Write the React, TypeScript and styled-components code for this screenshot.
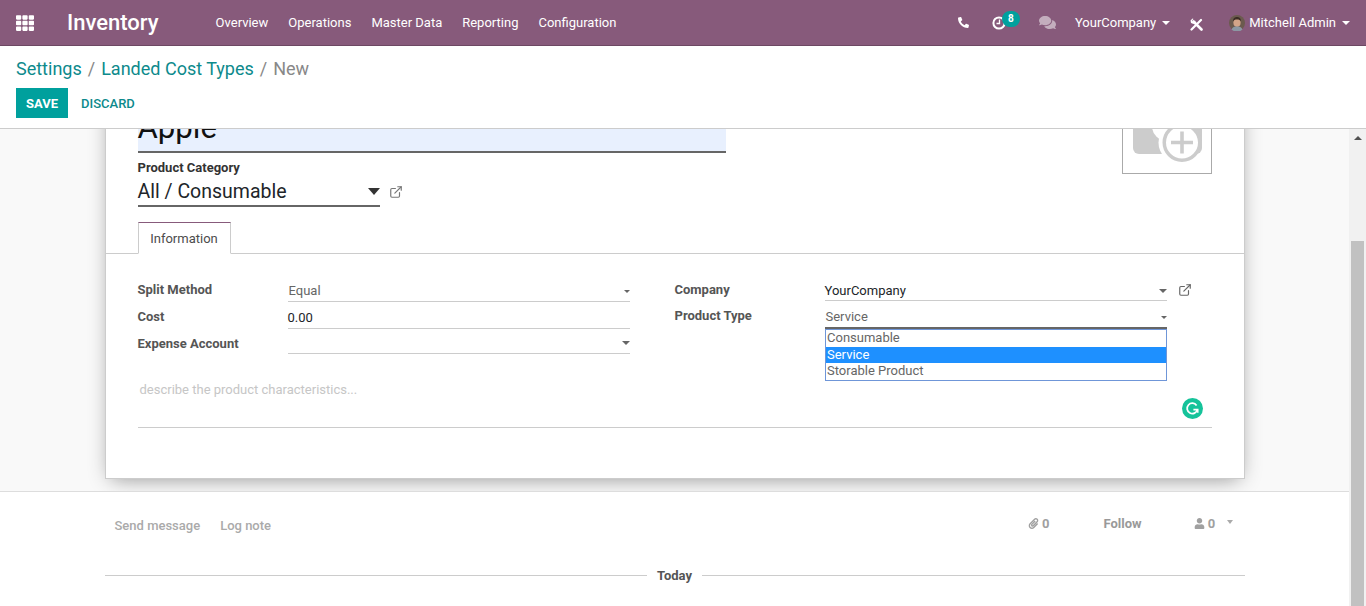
import styled, { createGlobalStyle } from "styled-components";
import { FaTh, FaPhone, FaComments, FaPaperclip, FaUser } from "react-icons/fa";
import { FiExternalLink } from "react-icons/fi";

const GlobalStyle = createGlobalStyle`
  html, body {
    margin: 0;
    height: 100%;
    overflow: hidden;
    background: #fff;
    font-family: Roboto, "Noto Sans", sans-serif;
    font-size: 13px;
    color: #4c4c4c;
  }
`;

const Page = styled.div`
  display: flex;
  flex-direction: column;
  height: 606px;
`;

const NavBar = styled.header`
  display: flex;
  align-items: center;
  flex: none;
  height: 45px;
  background: #875a7b;
  border-bottom: 1px solid #6d4863;
  color: #fff;
`;

const AppsButton = styled.span`
  display: flex;
  margin-left: 16px;
  font-size: 18px;
`;

const Brand = styled.span`
  margin-left: 33px;
  margin-right: 57px;
  font-size: 22px;
  font-weight: 500;
`;

const NavLink = styled.span`
  margin-right: 20px;
  font-size: 13px;
  color: #fff;
`;

const NavRight = styled.div`
  display: flex;
  align-items: center;
  margin-left: auto;
  padding-right: 16px;
`;

const NavIcon = styled.span<{ $gap: number; $muted?: boolean; $size?: number; $drop?: number }>`
  position: relative;
  display: flex;
  align-items: center;
  margin-left: ${({ $gap }) => $gap}px;
  margin-top: ${({ $drop }) => $drop ?? 0}px;
  font-size: ${({ $size }) => $size ?? 13}px;
  color: ${({ $muted }) => ($muted ? "rgba(255,255,255,0.5)" : "#fff")};
`;

const Badge = styled.span`
  position: absolute;
  left: 10px;
  top: -5px;
  width: 18px;
  height: 16px;
  border-radius: 9px;
  background: #00a09d;
  color: #fff;
  font-size: 10px;
  font-weight: 700;
  line-height: 16px;
  text-align: center;
`;

const NavText = styled.span<{ $gap: number }>`
  margin-left: ${({ $gap }) => $gap}px;
  color: #fff;
`;

const Caret = styled.span<{ $w: number; $color?: string; $gap?: number }>`
  flex: none;
  width: 0;
  height: 0;
  margin-left: ${({ $gap }) => $gap ?? 0}px;
  border-left: ${({ $w }) => $w / 2}px solid transparent;
  border-right: ${({ $w }) => $w / 2}px solid transparent;
  border-top: ${({ $w }) => Math.round($w * 0.5)}px solid ${({ $color }) => $color ?? "#666"};
`;

const ControlPanel = styled.div`
  flex: none;
  height: 83px;
  box-sizing: border-box;
  padding: 12px 16px 0;
  background: #fff;
  border-bottom: 1px solid #ccc;
`;

const Breadcrumb = styled.div`
  display: flex;
  gap: 6px;
  height: 22px;
  font-size: 18px;
  line-height: 22px;
  color: #888;
`;

const Crumb = styled.span`
  color: #0d8a8c;
`;

const Buttons = styled.div`
  display: flex;
  align-items: center;
  margin-top: 8px;
`;

const SaveButton = styled.button`
  width: 52px;
  height: 30px;
  padding: 0;
  border: none;
  background: #00a09d;
  color: #fff;
  font-family: inherit;
  font-size: 13px;
  font-weight: 700;
`;

const DiscardButton = styled.button`
  margin-left: 13px;
  padding: 0;
  border: none;
  background: none;
  color: #0d8a8c;
  font-family: inherit;
  font-size: 13px;
  font-weight: 500;
`;

const Body = styled.div`
  display: flex;
  flex: 1;
  min-height: 0;
`;

const Scroller = styled.main`
  flex: 1;
  min-width: 0;
  overflow: hidden;
`;

const SheetArea = styled.div`
  height: 362px;
  overflow: hidden;
  background: #f9f9f9;
`;

const Sheet = styled.section`
  box-sizing: border-box;
  width: 1140px;
  height: 400px;
  margin: -50px auto 0;
  padding: 4px 32px 0;
  background: #fff;
  border: 1px solid #ccc;
  box-shadow: 0 5px 20px -6px rgba(0, 0, 0, 0.45);
`;

const Head = styled.div`
  display: flex;
  justify-content: space-between;
  align-items: flex-start;
`;

const HeadLeft = styled.div`
  flex: 1;
  margin-top: 19px;
`;

const NameInput = styled.div`
  box-sizing: border-box;
  display: flex;
  align-items: flex-end;
  width: 588px;
  height: 50px;
  padding-bottom: 4px;
  background: #e8f0fe;
  border-bottom: 2px solid #666;
  color: #111;
  font-size: 31.2px;
  line-height: 38px;
`;

const CategoryLabel = styled.div`
  margin-top: 7px;
  font-weight: 700;
  line-height: 16px;
  color: #333;
`;

const CategoryRow = styled.div`
  display: flex;
  align-items: center;
`;

const CategoryValue = styled.div`
  box-sizing: border-box;
  display: flex;
  align-items: center;
  justify-content: space-between;
  width: 242px;
  height: 31px;
  padding-top: 2px;
  border-bottom: 2px solid #666;
  color: #212529;
  font-size: 19.5px;
`;

const LinkIcon = styled.span<{ $gap: number; $size: number }>`
  display: flex;
  margin-left: ${({ $gap }) => $gap}px;
  font-size: ${({ $size }) => $size}px;
  color: #777;
`;

const ImageBox = styled.div`
  box-sizing: border-box;
  flex: none;
  width: 90px;
  height: 90px;
  border: 1px solid #aaa;
`;

const TabBar = styled.div`
  display: flex;
  height: 32px;
  box-sizing: border-box;
  margin: 15px -32px 0;
  padding: 0 32px;
  border-bottom: 1px solid #ccc;
`;

const Tab = styled.div`
  box-sizing: border-box;
  width: 93px;
  height: 32px;
  background: #fff;
  border: 1px solid #ccc;
  border-top-color: #875a7b;
  border-bottom-color: #fff;
  line-height: 32px;
  text-align: center;
  color: #4c4c4c;
`;

const Groups = styled.div`
  display: grid;
  grid-template-columns: 492px 1fr;
  column-gap: 45px;
  padding-top: 27px;
`;

const Row = styled.div<{ $h: number }>`
  display: grid;
  grid-template-columns: 150px 342px auto;
  height: ${({ $h }) => $h}px;
`;

const FieldLabel = styled.label<{ $pad?: number }>`
  align-self: end;
  padding-bottom: ${({ $pad }) => $pad ?? 4}px;
  font-weight: 700;
  line-height: 16px;
  color: #555;
`;

const FieldValue = styled.div<{ $pad?: number; $indent?: number; $strong?: boolean; $focus?: boolean }>`
  position: relative;
  box-sizing: border-box;
  display: flex;
  align-items: flex-end;
  justify-content: space-between;
  height: 100%;
  padding-bottom: ${({ $pad }) => $pad ?? 2}px;
  padding-left: ${({ $indent }) => $indent ?? 0}px;
  line-height: 16px;
  border-bottom: ${({ $focus }) => ($focus ? "2px solid #666" : "1px solid #ccc")};
  color: ${({ $strong }) => ($strong ? "#212529" : "#666")};
`;

const CaretWrap = styled.span`
  display: flex;
  align-items: center;
  height: 16px;
`;

const FieldLink = styled.span`
  display: flex;
  align-self: start;
  margin: 2px 0 0 11px;
  font-size: 14px;
  color: #666;
`;

const OptionList = styled.ul`
  position: absolute;
  top: calc(100% + 2px);
  left: 0;
  right: 0;
  z-index: 2;
  box-sizing: border-box;
  height: 52px;
  margin: 0;
  padding: 0;
  list-style: none;
  background: #fff;
  border: 1px solid #6f96d8;
`;

const Option = styled.li<{ $active?: boolean }>`
  height: 16.67px;
  padding-left: 1.5px;
  line-height: 16.67px;
  background: ${({ $active }) => ($active ? "#1e90ff" : "transparent")};
  color: ${({ $active }) => ($active ? "#fff" : "#666")};
`;

const Description = styled.div`
  position: relative;
  box-sizing: border-box;
  height: 48px;
  margin-top: 26px;
  padding: 1px 0 0 2px;
  line-height: 18px;
  border-bottom: 1px solid #ccc;
  color: #c6c6c6;
`;

const GrammarlyBadge = styled.span`
  position: absolute;
  right: 9px;
  top: 18px;
  display: flex;
`;

const Chatter = styled.section`
  box-sizing: border-box;
  height: 114px;
  background: #fff;
  border-top: 1px solid #ddd;
`;

const ChatterInner = styled.div`
  width: 1140px;
  margin: 0 auto;
`;

const ChatterBar = styled.div`
  display: flex;
  align-items: center;
  height: 66px;
  padding-left: 10px;
  color: #a8a8a8;
`;

const ChatterTab = styled.span`
  margin-right: 20px;
  font-weight: 500;
  color: #aaa;
`;

const ChatterCount = styled.span<{ $left: number }>`
  display: flex;
  align-items: center;
  gap: 3px;
  margin-left: ${({ $left }) => $left}px;
  margin-top: -4px;
  font-weight: 700;
  color: #a0a0a0;
`;

const FollowLink = styled.span`
  margin-left: 54px;
  margin-top: -4px;
  font-weight: 700;
  color: #999;
`;

const FollowerCaret = styled(Caret)`
  margin-top: -7px;
`;

const Divider = styled.div`
  display: flex;
  align-items: center;
  gap: 10px;
  margin-top: 10px;
  font-weight: 700;
  color: #555;
  &::before,
  &::after {
    content: "";
    flex: 1;
    height: 1px;
    background: #ccc;
  }
`;

const ScrollTrack = styled.div`
  flex: none;
  display: flex;
  flex-direction: column;
  align-items: center;
  width: 17px;
  background: #f1f1f1;
`;

const ScrollArrow = styled.span`
  margin-top: 7px;
  border-left: 4px solid transparent;
  border-right: 4px solid transparent;
  border-bottom: 4px solid #505050;
`;

const ScrollThumb = styled.span`
  width: 13px;
  flex: 1;
  margin-top: 101px;
  background: #c1c1c1;
`;

const CameraPlus = () => (
  <svg width="88" height="88" viewBox="0 0 88 88">
    <path
      d="M10 -20h68a1 1 0 0 1 1 1v82a6 6 0 0 1-6 6H16a6 6 0 0 1-6-6z"
      fill="#ccc"
    />
    <circle cx="44" cy="41" r="15" fill="#fff" />
    <circle cx="56.500" cy="57.500" r="21" fill="#fff" />
    <rect x="56" y="69" width="24" height="12" fill="#fff" />
    <circle cx="59" cy="57.500" r="17.750" fill="#fff" stroke="#ccc" strokeWidth="3.500" />
    <path d="M48 55.700h22v3.600H48zM57.200 46.500h3.600v22h-3.600z" fill="#ccc" />
  </svg>
);

const ClockIcon = () => (
  <svg width="14" height="14" viewBox="0 0 14 14">
    <circle cx="7" cy="7" r="5.600" fill="none" stroke="#fff" strokeWidth="2" />
    <path d="M7.500 3.500v4H4.500" fill="none" stroke="#fff" strokeWidth="1.300" />
  </svg>
);

const ToolsIcon = () => (
  <svg width="13" height="13" viewBox="0 0 13 13">
    <path d="M3.500 3.500l8 8" stroke="#fff" strokeWidth="2.600" strokeLinecap="round" />
    <path d="M1.500 11.500l9.500-9.500" stroke="#fff" strokeWidth="2.200" strokeLinecap="round" />
    <path d="M0.500 2.500L2.500 .5l1 .5-1.500 1.500.5 1 1 .5L5 2.500l.5 1-2 2.500-2.500-1z" fill="#fff" />
  </svg>
);

const Avatar = () => (
  <svg width="16" height="16" viewBox="0 0 16 16">
    <circle cx="8" cy="8" r="8" fill="#6b5a4e" />
    <ellipse cx="8" cy="7.500" rx="3.600" ry="4.400" fill="#d3a488" />
    <path d="M4 6.500C4 3 6 2 8 2s4 1 4 4.500c-1-1.500-2-2-4-2s-3 .5-4 2z" fill="#3b2c24" />
    <path d="M2.500 14.500c1-2.500 3-3 5.500-3s4.500.5 5.500 3a8 8 0 0 1-11 0z" fill="#8c97a3" />
  </svg>
);

const Grammarly = () => (
  <svg width="21" height="21" viewBox="0 0 21 21">
    <circle cx="10.500" cy="10.500" r="10.500" fill="#15c39a" />
    <path
      d="M14.600 7.400a5.200 5.200 0 1 0 .8 4.200h-4"
      fill="none"
      stroke="#fff"
      strokeWidth="1.800"
    />
    <path d="M15.800 11.600v3.200" stroke="#fff" strokeWidth="1.500" />
  </svg>
);

const App = () => {
  return (
    <Page>
      <GlobalStyle />
      <NavBar>
        <AppsButton>
          <FaTh />
        </AppsButton>
        <Brand>Inventory</Brand>
        <NavLink>Overview</NavLink>
        <NavLink>Operations</NavLink>
        <NavLink>Master Data</NavLink>
        <NavLink>Reporting</NavLink>
        <NavLink>Configuration</NavLink>
        <NavRight>
          <NavIcon $gap={0} $size={11}>
            <FaPhone style={{ transform: "scaleX(-1)" }} />
          </NavIcon>
          <NavIcon $gap={23}>
            <ClockIcon />
            <Badge>8</Badge>
          </NavIcon>
          <NavIcon $gap={33} $muted $size={17}>
            <FaComments />
          </NavIcon>
          <NavText $gap={19}>YourCompany</NavText>
          <Caret $w={8} $color="#fff" $gap={6} />
          <NavIcon $gap={20} $drop={3}>
            <ToolsIcon />
          </NavIcon>
          <NavIcon $gap={26}>
            <Avatar />
          </NavIcon>
          <NavText $gap={4}>Mitchell Admin</NavText>
          <Caret $w={8} $color="#fff" $gap={6} />
        </NavRight>
      </NavBar>

      <ControlPanel>
        <Breadcrumb>
          <Crumb>Settings</Crumb>
          <span>/</span>
          <Crumb>Landed Cost Types</Crumb>
          <span>/</span>
          <span>New</span>
        </Breadcrumb>
        <Buttons>
          <SaveButton>SAVE</SaveButton>
          <DiscardButton>DISCARD</DiscardButton>
        </Buttons>
      </ControlPanel>

      <Body>
        <Scroller>
          <SheetArea>
            <Sheet>
              <Head>
                <HeadLeft>
                  <NameInput>Apple</NameInput>
                  <CategoryLabel>Product Category</CategoryLabel>
                  <CategoryRow>
                    <CategoryValue>
                      All / Consumable
                      <Caret $w={13} $color="#333" />
                    </CategoryValue>
                    <LinkIcon $gap={9} $size={14}>
                      <FiExternalLink />
                    </LinkIcon>
                  </CategoryRow>
                </HeadLeft>
                <ImageBox>
                  <CameraPlus />
                </ImageBox>
              </Head>

              <TabBar>
                <Tab>Information</Tab>
              </TabBar>

              <Groups>
                <div>
                  <Row $h={21}>
                    <FieldLabel>Split Method</FieldLabel>
                    <FieldValue $indent={1}>
                      Equal
                      <CaretWrap>
                        <Caret $w={6} />
                      </CaretWrap>
                    </FieldValue>
                  </Row>
                  <Row $h={27}>
                    <FieldLabel>Cost</FieldLabel>
                    <FieldValue $strong>0.00</FieldValue>
                  </Row>
                  <Row $h={25}>
                    <FieldLabel $pad={2}>Expense Account</FieldLabel>
                    <FieldValue>
                      <span />
                      <CaretWrap>
                        <Caret $w={8} />
                      </CaretWrap>
                    </FieldValue>
                  </Row>
                </div>
                <div>
                  <Row $h={20}>
                    <FieldLabel $pad={3}>Company</FieldLabel>
                    <FieldValue $pad={1} $strong>
                      YourCompany
                      <CaretWrap>
                        <Caret $w={8} />
                      </CaretWrap>
                    </FieldValue>
                    <FieldLink>
                      <FiExternalLink />
                    </FieldLink>
                  </Row>
                  <Row $h={28}>
                    <FieldLabel $pad={5}>Product Type</FieldLabel>
                    <FieldValue $focus $indent={1}>
                      Service
                      <CaretWrap>
                        <Caret $w={6} />
                      </CaretWrap>
                      <OptionList>
                        <Option>Consumable</Option>
                        <Option $active>Service</Option>
                        <Option>Storable Product</Option>
                      </OptionList>
                    </FieldValue>
                  </Row>
                </div>
              </Groups>

              <Description>
                describe the product characteristics...
                <GrammarlyBadge>
                  <Grammarly />
                </GrammarlyBadge>
              </Description>
            </Sheet>
          </SheetArea>

          <Chatter>
            <ChatterInner>
              <ChatterBar>
                <ChatterTab>Send message</ChatterTab>
                <ChatterTab>Log note</ChatterTab>
                <ChatterCount $left={737}>
                  <FaPaperclip size={11} />0
                </ChatterCount>
                <FollowLink>Follow</FollowLink>
                <ChatterCount $left={52}>
                  <FaUser size={11} />0
                </ChatterCount>
                <FollowerCaret $w={7} $color="#aaa" $gap={12} />
              </ChatterBar>
              <Divider>Today</Divider>
            </ChatterInner>
          </Chatter>
        </Scroller>
        <ScrollTrack>
          <ScrollArrow />
          <ScrollThumb />
        </ScrollTrack>
      </Body>
    </Page>
  );
};

export default App;
